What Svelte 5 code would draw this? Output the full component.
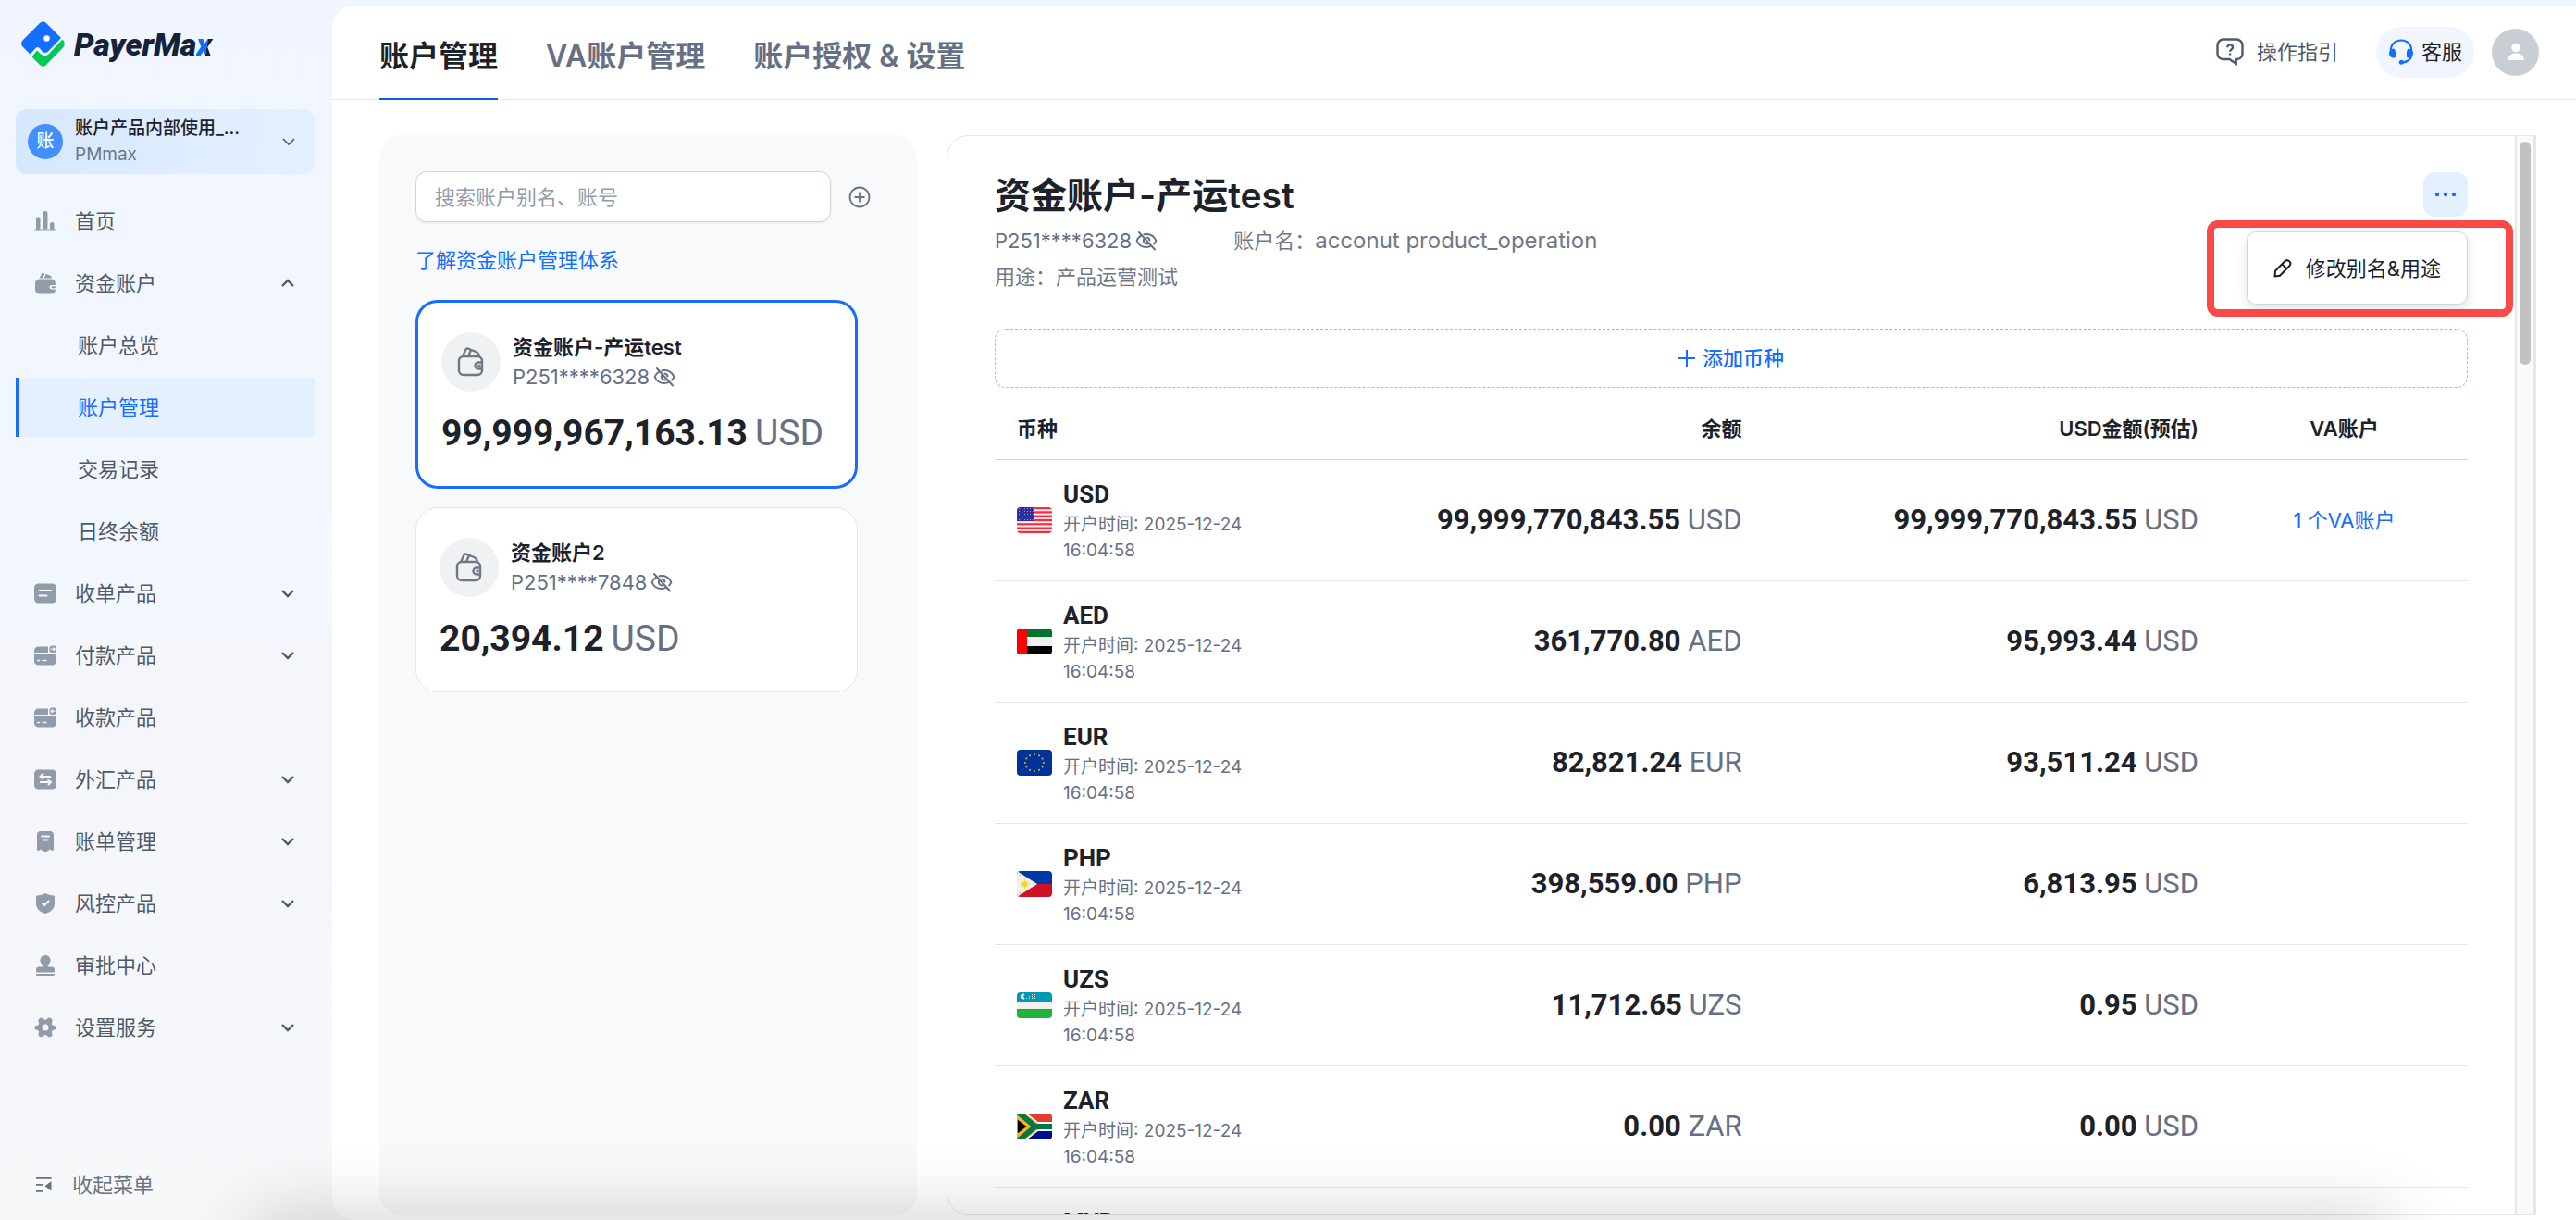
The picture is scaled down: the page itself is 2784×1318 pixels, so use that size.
<script>
	const menu = [
		{ icon: 'home', name: '首页' },
		{ icon: 'wallet', name: '资金账户', open: true, children: ['账户总览', '账户管理', '交易记录', '日终余额'] },
		{ icon: 'order', name: '收单产品', more: true },
		{ icon: 'payout', name: '付款产品', more: true },
		{ icon: 'collect', name: '收款产品' },
		{ icon: 'fx', name: '外汇产品', more: true },
		{ icon: 'bill', name: '账单管理', more: true },
		{ icon: 'shield', name: '风控产品', more: true },
		{ icon: 'stamp', name: '审批中心' },
		{ icon: 'gear', name: '设置服务', more: true }
	]
	const tabs = ['账户管理', 'VA账户管理', '账户授权 & 设置']

	const accounts = [
		{ name: '资金账户-产运test', no: 'P251****6328', amount: '99,999,967,163.13' },
		{ name: '资金账户2', no: 'P251****7848', amount: '20,394.12' }
	]

	const balances = [
		{ code: 'USD', amount: '99,999,770,843.55', usd: '99,999,770,843.55', va: '1 个VA账户' },
		{ code: 'AED', amount: '361,770.80', usd: '95,993.44' },
		{ code: 'EUR', amount: '82,821.24', usd: '93,511.24' },
		{ code: 'PHP', amount: '398,559.00', usd: '6,813.95' },
		{ code: 'UZS', amount: '11,712.65', usd: '0.95' },
		{ code: 'ZAR', amount: '0.00', usd: '0.00' },
		{ code: 'MYR', amount: '0.00', usd: '0.00' }
	]

	// star positions on the EU flag
	const stars = Array.from({ length: 12 }, (_, i) => ({
		x: 19 + 10 * Math.cos((i * Math.PI) / 6),
		y: 14 + 9 * Math.sin((i * Math.PI) / 6)
	}))

	let activeTab = $state(0)
	let activePage = $state('账户管理')
	let activeAccount = $state(0)
	let keyword = $state('')
</script>

{#snippet chevron(up, thin)}
	<svg class="chevron" viewBox="0 0 14 14" width="14" height="14" fill="none" stroke="currentColor" stroke-width={thin ? 1.6 : 2.4}>
		<path d={up ? 'M1 10l6-6 6 6' : 'M1 4l6 6 6-6'} />
	</svg>
{/snippet}

{#snippet eyeOff()}
	<svg class="eye" viewBox="0 0 24 24" width="24" height="24" fill="none" stroke="currentColor" stroke-width="2" stroke-linecap="round">
		<path d="M6.2 6.6C4 8 2.300 10 1.600 12c1.800 4.600 5.800 7 10.400 7 2 0 3.700-.5 5.200-1.300" />
		<path d="M9.500 5.300C14.800 4 20.400 6.600 22.400 12c-.5 1.300-1.200 2.500-2.200 3.500" />
		<path d="M9.300 10.200a3.600 3.600 0 0 0 4.800 4.900M12.500 8.500a3.600 3.600 0 0 1 3 3" />
		<path d="M4 3l17 18.500" />
	</svg>
{/snippet}

{#snippet walletLine()}
	<svg viewBox="0 0 30 32" width="30" height="32" fill="none" stroke="currentColor" stroke-width="2.400" stroke-linejoin="round">
		<rect x="2" y="10" width="25" height="20" rx="5" />
		<path d="M6 10l3.500-7.500c.4-.9 1.400-1.200 2.200-.9l8.600 3.400c2.200.9 3.400 2.500 3.700 5M12 10l3-7" />
		<path d="M28 16.500h-5a3.500 3.500 0 0 0 0 7h5M22.500 20h3" />
	</svg>
{/snippet}

{#snippet navIcon(name)}
	<svg class="nav-icon" viewBox="0 0 24 24" width="24" height="24" fill="currentColor">
		{#if name === 'home'}
			<rect y="20.500" width="24" height="2" rx="1" />
			<rect x="2" y="7.500" width="4.500" height="14" rx="2" />
			<rect x="9.500" y="1" width="5" height="20" rx="2.400" />
			<rect x="17" y="13" width="4.500" height="8.500" rx="2" />
		{:else if name === 'wallet'}
			<path d="M5.500 6.500L8 1.600c.3-.7 1-.9 1.600-.7l1.800.6-2.500 5zM10.500 6.500l2.200-4.500 4 1.600c1.300.5 2 1.500 2.300 2.900z" />
			<path d="M5.500 7.500h13A4.500 4.500 0 0 1 22.800 12v2h-4a2.200 2.200 0 0 0 0 4.600h4v.4a4.500 4.500 0 0 1-4.300 4.500h-13A4.500 4.500 0 0 1 1 19v-7a4.500 4.500 0 0 1 4.500-4.500z" />
			<rect x="18.500" y="15.300" width="4.500" height="2" rx="1" />
		{:else if name === 'order'}
			<rect y="1.500" width="24" height="21" rx="4.500" />
			<path d="M5.500 9h13M5.500 14.500h8" stroke="#f3f6fc" stroke-width="2" stroke-linecap="round" />
		{:else if name === 'payout' || name === 'collect'}
			<path d="M4.500 2.500H15V9H0V7a4.500 4.500 0 0 1 4.500-4.500zM0 10.500h24v7.500a4.500 4.500 0 0 1-4.500 4.500h-15A4.500 4.500 0 0 1 0 18z" />
			<rect x="16.500" y="1.500" width="7.500" height="7.500" rx="2.500" />
			<path d="M3.500 17.500h2M9 17.500h4" stroke="#f3f6fc" stroke-width="1.500" stroke-linecap="round" />
			{#if name === 'payout'}
				<path d="M18 5.200h4.200M20.500 3.400l1.800 1.800-1.800 1.800" fill="none" stroke="#f3f6fc" stroke-width="1.300" />
			{:else}
				<path d="M22.500 5.200h-4.200M20 3.400l-1.800 1.800L20 7" fill="none" stroke="#f3f6fc" stroke-width="1.300" />
			{/if}
		{:else if name === 'fx'}
			<rect y="1.500" width="24" height="21" rx="4.500" />
			<path d="M18 9H7M10 5.500L6.500 9l3 2.500M6 15h11.500M14.500 12.500L18 15l-3 3" fill="none" stroke="#f4f6fb" stroke-width="2" />
		{:else if name === 'bill'}
			<path d="M7 1h10a4 4 0 0 1 4 4v16.500c-1.500.8-3 .4-4-.9-1.400 1-2 2.400-5 2.400s-3.600-1.400-5-2.400c-1 1.300-2.500 1.700-4 .9V5a4 4 0 0 1 4-4z" />
			<path d="M8 6.500h8M9 10.500h6" stroke="#f4f6fb" stroke-width="1.800" stroke-linecap="round" />
		{:else if name === 'shield'}
			<path d="M12 1c3 1.700 6 2.300 9 2.400.6 0 1 .5 1 1V12c0 5.500-4 9.500-10 11-6-1.500-10-5.500-10-11V4.400c0-.5.4-1 1-1C6 3.300 9 2.700 12 1z" />
			<path d="M8.500 11.500l2.500 2.500 5-5" fill="none" stroke="#f4f6fb" stroke-width="2" />
		{:else if name === 'stamp'}
			<path d="M12 1a5.500 5.500 0 0 1 3.200 10c-.9.800-.9 2.500.6 2.500H19a3 3 0 0 1 3 3v2a1 1 0 0 1-1 1H3a1 1 0 0 1-1-1v-2a3 3 0 0 1 3-3h3.200c1.500 0 1.500-1.700.6-2.500A5.500 5.500 0 0 1 12 1z" />
			<rect x="2" y="21" width="20" height="2" rx="1" />
		{:else}
			<path fill-rule="evenodd" d="M5.500 2.500C7 1 9 1 10 2.800c.8 1.300 3.200 1.300 4 0C15 1 17 1 18.500 2.500c1.600 1.300 1.200 3 .6 4.300-.6 1.500.4 2.900 2 3 3.400.4 3.400 4.600 0 5-1.600.1-2.600 1.500-2 3 .6 1.300.6 3-.8 3.900-1.600 1.100-3.400.700-4.300-.8-.8-1.200-3.200-1.200-4 0-.9 1.500-2.700 1.900-4.300.8-1.400-.9-1.400-2.600-.8-3.900.6-1.500-.4-2.900-2-3-3.400-.4-3.400-4.600 0-5 1.600-.1 2.600-1.500 2-3-.6-1.300-1-3 .6-4.300zM12 8.500a3.500 3.500 0 1 0 0 7 3.500 3.500 0 0 0 0-7z" />
		{/if}
	</svg>
{/snippet}

{#snippet flag(code)}
	<svg class="flag" viewBox="0 0 38 28" width="38" height="28">
		{#if code === 'USD'}
			<rect width="38" height="28" fill="#f0f0f0" />
			{#each [0, 1, 2, 3, 4, 5, 6] as i}
				<rect y={i * 4.3} width="38" height="2.200" fill="#fb2a3c" />
			{/each}
			<rect width="19" height="15" fill="#2e2f9c" />
			{#each [2, 5, 8, 11, 14] as y}
				<path d="M2 {y - 0.5}h16" stroke="#9a9bd8" stroke-width="1" stroke-dasharray="1 2" />
			{/each}
		{:else if code === 'AED'}
			<rect width="38" height="28" fill="#f0f0f0" />
			<rect width="38" height="9" fill="#00732f" />
			<rect y="19" width="38" height="9" fill="#000" />
			<rect width="11" height="28" fill="#f00" />
		{:else if code === 'EUR'}
			<rect width="38" height="28" fill="#039" />
			{#each stars as s}
				<circle cx={s.x} cy={s.y} r="1" fill="#ddb52e" />
			{/each}
		{:else if code === 'PHP'}
			<rect width="38" height="14" fill="#0038a8" />
			<rect y="14" width="38" height="14" fill="#ce1126" />
			<path d="M0 0l22 14L0 28z" fill="#f0f0f0" />
			<circle cx="8.500" cy="14" r="2.600" fill="#fcd116" />
			<path d="M8.500 9v10M3.500 14h10M5 10.500l7 7M12 10.500l-7 7" stroke="#fcd116" stroke-width="1" />
			<path d="M2 4h2M2 24h2M17 14h2" stroke="#fcd116" stroke-width="1.500" />
		{:else if code === 'UZS'}
			<rect width="38" height="28" fill="#f0f0f0" />
			<rect width="38" height="9" fill="#0099b5" />
			<rect y="19" width="38" height="9" fill="#1eb53a" />
			<path d="M0 9.500h38M0 18.500h38" stroke="#ce4a50" stroke-width="1" />
			<path d="M8.500 2a3 3 0 1 0 0 5 3.500 3.500 0 0 1 0-5z" fill="#fff" />
			<path d="M10 6.500h12M13 4.500h9M16 2.500h6" stroke="#fff" stroke-width="1" stroke-dasharray="1 2" />
		{:else if code === 'ZAR'}
			<rect width="38" height="14" fill="#e23d2e" />
			<rect y="14" width="38" height="14" fill="#000c8a" />
			<path d="M-2-4l23 18L-2 32M20 14h20" fill="none" stroke="#fff" stroke-width="10" />
			<path d="M-4-3l23 17L-4 31" fill="#000" stroke="#ffb612" stroke-width="10" />
			<path d="M-3-5l23 19L-3 33M18 14h22" fill="none" stroke="#007749" stroke-width="6" />
			<path d="M0 5l12 9L0 23z" fill="#000" stroke="#ffb612" stroke-width="1.600" />
		{:else}
			<rect width="38" height="28" fill="#cc0001" />
			<rect width="19" height="15" fill="#010066" />
		{/if}
	</svg>
{/snippet}

<div class="app">
	<aside class="sidebar">
		<a class="logo" href="/">
			<svg viewBox="0 0 47 49" width="47" height="49">
				<path d="M9 35l-7.500-7.500Q-1.500 24 1.500 20.500L20 2q3.500-3.500 7 0l16 16-13.500 14q-3.500 3.500-7 .5L20 29.300q-2-2.300-4-.8l-5 5.500q-1 1.500-2 1z" fill="#146eff" />
				<circle cx="27.500" cy="18.500" r="3.200" fill="#fff" />
				<path d="M12.500 37l4.500-5.500 4 3.700q4.500 3.800 8.500.3L44.500 19.500q4 4 1 8.500L27 47q-3.500 3.500-7 0l-7.500-7.500q-1.200-1.200 0-2.500z" fill="#05c754" />
			</svg>
			<span class="logo-text">PayerMa<span class="logo-x">x</span></span>
		</a>

		<button class="org">
			<span class="org-badge">账</span>
			<span class="org-names">
				<span class="org-name">账户产品内部使用_...</span>
				<span class="org-sub">PMmax</span>
			</span>
			{@render chevron(false, true)}
		</button>

		<nav class="menu">
			{#each menu as item}
				<a class="menu-item" href="#{item.icon}">
					{@render navIcon(item.icon)}
					<span>{item.name}</span>
					{#if item.open || item.more}
						{@render chevron(item.open, false)}
					{/if}
				</a>
				{#if item.children}
					{#each item.children as child}
						<a class="menu-item sub" class:active={activePage === child} href="#{child}" onclick={() => (activePage = child)}>{child}</a>
					{/each}
				{/if}
			{/each}
		</nav>

		<button class="collapse">
			<svg viewBox="0 0 17 16" width="17" height="16" fill="currentColor">
				<path d="M0 0h16.500v1.800H0zM0 7h7v1.800H0zM0 14h8v1.800H0zM16.500 4v10.500L9.500 9.300z" />
			</svg>
			收起菜单
		</button>
	</aside>

	<main class="main">
		<header class="header">
			<div class="tabs" role="tablist">
				{#each tabs as tab, i}
					<button class="tab" class:active={activeTab === i} role="tab" aria-selected={activeTab === i} onclick={() => (activeTab = i)}>{tab}</button>
				{/each}
			</div>
			<div class="tools">
				<a class="guide" href="#guide">
					<svg viewBox="0 0 30 30" width="30" height="30" fill="none" stroke="currentColor" stroke-width="2.400">
						<path d="M7.500 1.500h14.500a6.500 6.500 0 0 1 6.500 6.500v9a6 6 0 0 1-6 6h-.8v4.800L14.500 23H7.500a6 6 0 0 1-6-6V8a6.500 6.500 0 0 1 6-6.500z" />
						<path d="M12.200 10.200c0-3.800 5.800-3.600 5.800 0 0 2.400-2.900 2-2.900 4.600M15.100 16.400v2.200" />
					</svg>
					操作指引
				</a>
				<button class="service">
					<svg viewBox="0 0 28 28" width="28" height="28" fill="none" stroke="currentColor" stroke-width="2.200">
						<path d="M3 14C2 6 7.500 1.500 14 1.500S26 6 25 14M25 19c-1.500 4-5.500 6-9.500 6.500" />
						<path d="M4 11c2-1.500 4 0 4 4v5c-3 1.500-7-.5-7-4.500 0-2 1-3.800 3-4.500zM24 11c-2-1.500-4 0-4 4v5c3 1.500 7-.5 7-4.500 0-2-1-3.800-3-4.500z" fill="currentColor" stroke="none" />
						<circle cx="14.300" cy="25.300" r="2.500" fill="currentColor" stroke="none" />
					</svg>
					客服
				</button>
				<button class="avatar" aria-label="个人中心">
					<svg viewBox="0 0 18 20" width="18" height="20" fill="#fff">
						<circle cx="9" cy="5.500" r="4.700" />
						<path d="M0 19c.5-4.500 4-7.500 9-7.500s8.500 3 9 7.500z" />
					</svg>
				</button>
			</div>
		</header>

		<div class="content">
			<section class="accounts">
				<div class="search">
					<input type="text" aria-label="搜索账户" placeholder="搜索账户别名、账号" bind:value={keyword} />
					<button class="add" aria-label="新增账户">
						<svg viewBox="0 0 24 24" width="24" height="24" fill="none" stroke="currentColor" stroke-width="1.800">
							<circle cx="12" cy="12" r="10.500" />
							<path d="M6.500 12h11M12 6.500v11" />
						</svg>
					</button>
				</div>
				<a class="learn" href="#learn">了解资金账户管理体系</a>

				{#each accounts as account, i}
					<button class="card" class:selected={activeAccount === i} onclick={() => (activeAccount = i)}>
						<span class="card-top">
							<span class="card-icon">{@render walletLine()}</span>
							<span class="card-names">
								<span class="card-name">{account.name}</span>
								<span class="card-no">{account.no}{@render eyeOff()}</span>
							</span>
						</span>
						<span class="card-amount"><b>{account.amount}</b>USD</span>
					</button>
				{/each}
			</section>

			<section class="detail">
				<div class="detail-body">
					<div class="detail-head">
						<h1>资金账户-产运test</h1>
						<div class="more-wrap">
							<button class="more" aria-label="更多">
								<svg viewBox="0 0 24 6" width="24" height="6" fill="currentColor">
									<circle cx="3" cy="3" r="2.200" />
									<circle cx="12" cy="3" r="2.200" />
									<circle cx="21" cy="3" r="2.200" />
								</svg>
							</button>
							<div class="dropdown">
								<button class="dropdown-item">
									<svg viewBox="0 0 20 20" width="20" height="20" fill="none" stroke="currentColor" stroke-width="2" stroke-linejoin="round">
										<path d="M1.500 18.500l.6-6L12.300 2.300c3.400-3.200 8.200 1.700 5 5L7 17.700zM9.500 5.500l5 5" />
									</svg>
									修改别名&用途
								</button>
								<div class="highlight"></div>
							</div>
						</div>
					</div>
					<div class="meta">
						<span class="meta-no">P251****6328{@render eyeOff()}</span>
						<span class="meta-name">账户名：<span class="holder">acconut product_operation</span></span>
					</div>
					<div class="usage">用途：产品运营测试</div>

					<button class="add-currency">
						<svg viewBox="0 0 18 18" width="18" height="18" stroke="currentColor" stroke-width="2">
							<path d="M0 9h18M9 0v18" />
						</svg>
						添加币种
					</button>

					<table>
						<thead>
							<tr>
								<th class="col-cur">币种</th>
								<th class="col-amt">余额</th>
								<th class="col-amt">USD金额(预估)</th>
								<th class="col-va">VA账户</th>
							</tr>
						</thead>
						<tbody>
							{#each balances as row}
								<tr>
									<td>
										<div class="currency">
											{@render flag(row.code)}
											<div>
												<div class="code">{row.code}</div>
												<div class="opened">开户时间: 2025-12-24 16:04:58</div>
											</div>
										</div>
									</td>
									<td class="amt"><b>{row.amount}</b> {row.code}</td>
									<td class="amt"><b>{row.usd}</b> USD</td>
									<td class="va">
										{#if row.va}<a href="#va">{row.va}</a>{/if}
									</td>
								</tr>
							{/each}
						</tbody>
					</table>
				</div>
				<div class="scrollbar"><div class="thumb"></div></div>
			</section>
		</div>
	</main>
	<div class="dock-shadow"></div>
</div>

<style>
	:global(body) {
		margin: 0;
		background: #f0f5ff;
	}

	.app {
		position: relative;
		display: flex;
		box-sizing: border-box;
		height: 100vh;
		padding-top: 6px;
		overflow: hidden;
		background: linear-gradient(180deg, #f0f5ff 0%, #f3f7ff 48%, #f5f6fb 56%, #f5f7fb 86%, #f7f8f9 100%);
		font-family: Inter, "Noto Sans CJK SC", sans-serif;
		font-size: 22px;
		line-height: 32px;
		color: #1d2129;
	}

	button {
		padding: 0;
		border: none;
		background: none;
		font: inherit;
		color: inherit;
		text-align: left;
		cursor: pointer;
	}

	a {
		color: inherit;
		text-decoration: none;
	}

	svg {
		display: block;
		flex-shrink: 0;
	}

	/* sidebar */
	.sidebar {
		display: flex;
		flex-direction: column;
		flex-shrink: 0;
		box-sizing: border-box;
		width: 359px;
		padding: 16px 19px 22px 17px;
	}

	.logo {
		display: flex;
		align-items: center;
		gap: 10px;
		height: 50px;
		margin-left: 6px;
	}

	.logo-text {
		padding-top: 2px;
		font-family: Roboto, sans-serif;
		font-size: 34px;
		font-style: italic;
		font-weight: 900;
		color: #14233a;
	}

	.logo-x {
		padding-right: 4px;
		background: linear-gradient(100deg, #146eff 56%, #14233a 56%);
		background-clip: text;
		color: transparent;
	}

	.org {
		display: flex;
		align-items: center;
		height: 70px;
		margin-top: 46px;
		padding: 0 21px 0 13px;
		border-radius: 12px;
		background: linear-gradient(100deg, #d6e8ff, #e4f0ff);
	}

	.org-badge {
		width: 38px;
		border-radius: 50%;
		background: #4290ff;
		color: #fff;
		font-size: 19px;
		font-weight: 500;
		line-height: 38px;
		text-align: center;
	}

	.org-names {
		display: flex;
		flex-direction: column;
		flex-grow: 1;
		margin-left: 13px;
		font-size: 19px;
		line-height: 28px;
	}

	.org-name {
		font-weight: 500;
	}

	.org-sub {
		color: #6b7785;
	}

	.chevron {
		color: #4e5969;
	}

	.menu {
		display: flex;
		flex-direction: column;
		gap: 3px;
		margin-top: 19px;
		color: #4e5969;
	}

	.menu-item {
		display: flex;
		align-items: center;
		height: 64px;
		padding: 0 22px 0 20px;
	}

	.menu-item > span {
		flex-grow: 1;
		margin-left: 20px;
	}

	.nav-icon {
		color: #929ba9;
	}

	.sub {
		padding-left: 64px;
		border-left: 3px solid transparent;
	}

	.sub.active {
		border-color: #146eff;
		background: #e5f0ff;
		color: #146eff;
	}

	.collapse {
		display: flex;
		align-items: center;
		gap: 22px;
		margin-top: auto;
		padding-left: 22px;
		color: #6b7280;
	}

	/* header */
	.main {
		display: flex;
		flex-direction: column;
		flex-grow: 1;
		min-width: 0;
		border-radius: 24px 0 0 24px;
		background: #fff;
	}

	.header {
		display: flex;
		justify-content: space-between;
		flex-shrink: 0;
		height: 101px;
		padding: 0 40px 0 51px;
		border-bottom: 1px solid #e5e6eb;
	}

	.tabs {
		display: flex;
		gap: 52px;
		height: 102px;
	}

	.tab {
		box-sizing: border-box;
		padding-top: 10px;
		border-bottom: 2px solid transparent;
		color: #667085;
		font-size: 32px;
		font-weight: 600;
	}

	.tab.active {
		border-color: #0c5fe0;
		color: #1d2129;
	}

	.tools {
		display: flex;
		align-items: center;
		height: 100px;
	}

	.guide {
		display: flex;
		align-items: center;
		gap: 14px;
		color: #4e5969;
	}

	.service {
		display: flex;
		align-items: center;
		gap: 8px;
		height: 55px;
		margin: 0 19px 0 41px;
		padding: 0 13px;
		border-radius: 28px;
		background: #f0f5ff;
	}

	.service svg {
		color: #146eff;
	}

	.avatar {
		display: flex;
		align-items: center;
		justify-content: center;
		width: 51px;
		height: 51px;
		border-radius: 50%;
		background: #c9cdd4;
	}

	/* account list */
	.content {
		display: flex;
		flex-grow: 1;
		gap: 32px;
		min-height: 0;
		padding: 38px 43px 5px 51px;
	}

	.accounts {
		flex-shrink: 0;
		box-sizing: border-box;
		width: 581px;
		padding: 39px;
		border-radius: 24px;
		background: #f8f9fb;
	}

	.search {
		display: flex;
		align-items: center;
		gap: 19px;
		padding-right: 11px;
	}

	.search input {
		flex-grow: 1;
		box-sizing: border-box;
		min-width: 0;
		height: 55px;
		padding: 0 20px;
		border: 1px solid #d0d5dd;
		border-radius: 12px;
		background: #fff;
		box-shadow: 0 1px 3px rgba(16, 24, 40, .08);
		font: inherit;
	}

	.search input::placeholder {
		color: #929ba9;
	}

	.add {
		color: #6b7280;
	}

	.learn {
		display: block;
		margin: 25px 0 27px;
		color: #146eff;
	}

	.card {
		display: block;
		box-sizing: border-box;
		width: 478px;
		margin-bottom: 20px;
		padding: 32px 25px;
		border: 1px solid #e5e6eb;
		border-radius: 24px;
		background: #fff;
	}

	.card.selected {
		border: 3px solid #146eff;
	}

	.card-top {
		display: flex;
		gap: 13px;
	}

	.card-icon {
		display: flex;
		align-items: center;
		justify-content: center;
		width: 64px;
		height: 64px;
		border-radius: 50%;
		background: #f0f1f3;
		color: #717885;
	}

	.card-names {
		display: flex;
		flex-direction: column;
	}

	.card-name {
		font-weight: 600;
	}

	.card-no,
	.meta-no {
		display: flex;
		align-items: center;
		gap: 4px;
		color: #667085;
	}

	.card-amount {
		display: flex;
		gap: 8px;
		margin-top: 20px;
		color: #667085;
		font-family: Roboto, sans-serif;
		font-size: 39px;
		line-height: 50px;
	}

	b {
		color: #1d2129;
		font-weight: 700;
	}

	/* account detail */
	.detail {
		display: flex;
		flex-grow: 1;
		min-width: 0;
		border: 1px solid #e5e6eb;
		border-radius: 24px 0 0 24px;
		overflow: hidden;
	}

	.detail-body {
		flex-grow: 1;
		min-width: 0;
		padding: 39px 51px 0;
	}

	.scrollbar {
		flex-shrink: 0;
		width: 18px;
		padding-top: 6px;
		border: solid #e7e7e7;
		border-width: 0 2px;
		background: #fafafa;
	}

	.thumb {
		width: 12px;
		height: 241px;
		margin: 0 auto;
		border-radius: 6px;
		background: #c1c1c1;
	}

	.detail-head {
		display: flex;
		justify-content: space-between;
	}

	h1 {
		margin: 0;
		font-size: 39px;
		font-weight: 600;
		line-height: 50px;
	}

	.more-wrap {
		position: relative;
	}

	.more {
		display: flex;
		align-items: center;
		justify-content: center;
		width: 48px;
		height: 48px;
		border-radius: 12px;
		background: #e5f0ff;
		color: #146eff;
	}

	.dropdown {
		position: absolute;
		top: 64px;
		right: 0;
		z-index: 5;
		border: 1px solid #d0d5dd;
		border-radius: 10px;
		background: #fff;
		box-shadow: 0 4px 12px rgba(16, 24, 40, .12);
	}

	.dropdown-item {
		display: flex;
		align-items: center;
		gap: 15px;
		height: 77px;
		padding: 0 28px;
		white-space: nowrap;
	}

	.highlight {
		position: absolute;
		inset: -13px -50px -14px -44px;
		border: 8px solid #f84b48;
		border-radius: 12px;
		pointer-events: none;
	}

	.meta {
		display: flex;
		margin-top: 7px;
		color: #717885;
		line-height: 34px;
	}

	.meta-name {
		margin-left: 40px;
		padding-left: 41px;
		border-left: 1px solid #d0d5dd;
	}

	.holder {
		font-size: 24px;
	}

	.usage {
		margin-top: 6px;
		color: #717885;
	}

	.add-currency {
		display: flex;
		align-items: center;
		justify-content: center;
		gap: 8px;
		box-sizing: border-box;
		width: 100%;
		height: 64px;
		margin: 40px 0 10px;
		border: 1px dashed #8fc1ff;
		border-radius: 12px;
		color: #146eff;
		font-weight: 500;
	}

	table {
		width: 100%;
		border-collapse: separate;
		border-spacing: 0;
		table-layout: fixed;
	}

	th,
	td {
		box-sizing: border-box;
		padding: 0 24px;
		border-bottom: 1px solid #e5e6eb;
		text-align: right;
	}

	th {
		height: 68px;
		border-color: #d0d5dd;
		font-weight: 600;
	}

	td {
		height: 131px;
	}

	.col-cur {
		width: 338px;
		text-align: left;
	}

	.col-amt {
		width: 31%;
	}

	.col-va,
	.va {
		text-align: center;
	}

	.currency {
		display: flex;
		align-items: center;
		gap: 12px;
		text-align: left;
	}

	.flag {
		border-radius: 4px;
	}

	.code {
		font-family: Roboto, sans-serif;
		font-size: 26px;
		font-weight: 700;
		line-height: 38px;
	}

	.opened {
		color: #667085;
		font-size: 19px;
		line-height: 28px;
	}

	.amt {
		color: #667085;
		font-family: Roboto, sans-serif;
		font-size: 31px;
	}

	.va a {
		color: #146eff;
	}

	/* soft shade along the bottom edge of the window */
	.dock-shadow {
		position: absolute;
		right: 200px;
		bottom: -60px;
		left: 270px;
		height: 60px;
		box-shadow: 0 0 80px rgba(0, 0, 0, .22);
		pointer-events: none;
	}
</style>
